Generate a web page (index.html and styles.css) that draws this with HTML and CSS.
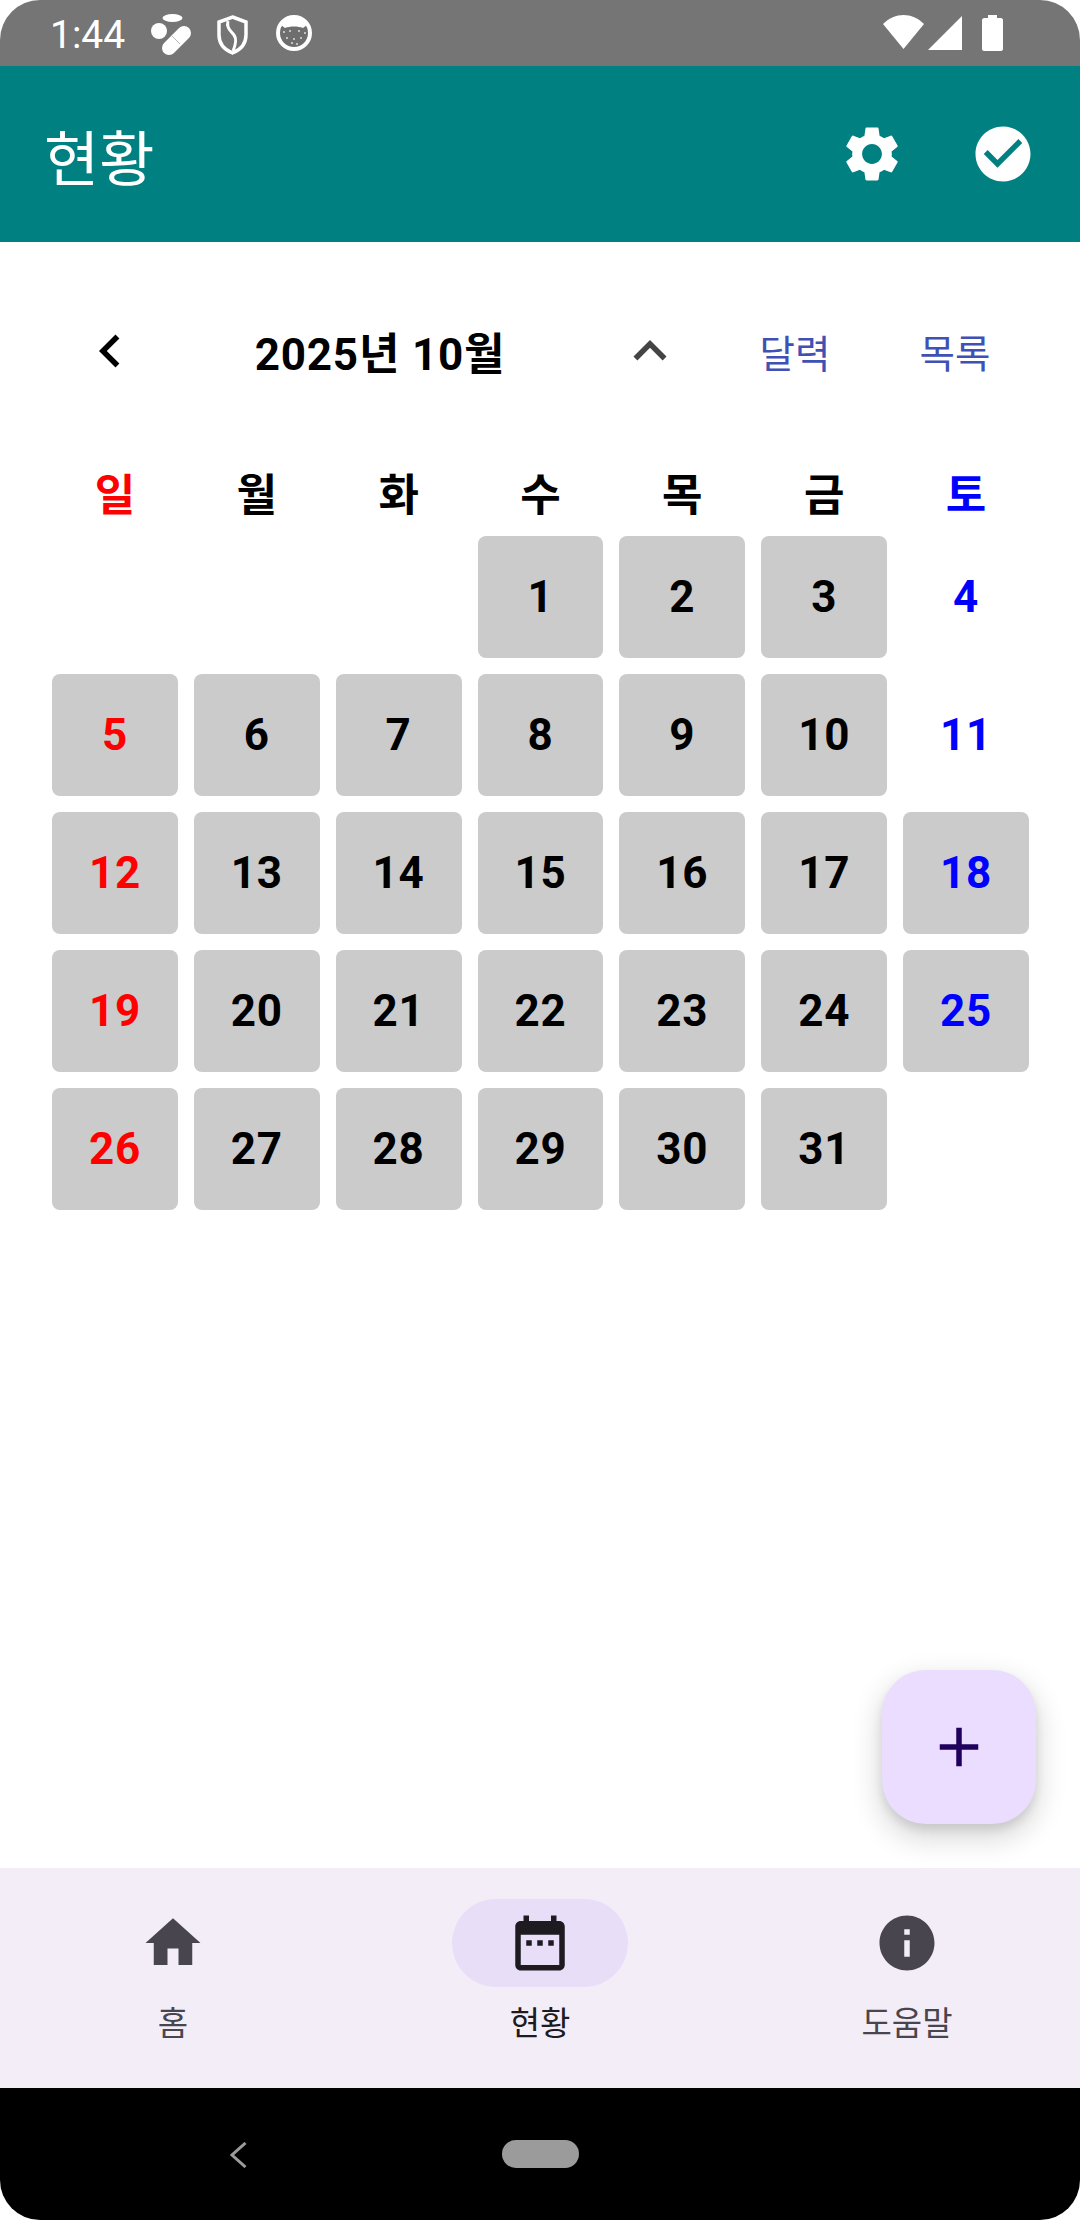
FILE: index.html
```html
<!DOCTYPE html>
<html lang="ko">
<head>
    <meta charset="UTF-8">
    <meta name="viewport" content="width=device-width, initial-scale=1.0">
    <title>현황</title>
    <link rel="stylesheet" href="styles.css">
</head>
<body>
    <div class="phone">
        <div class="status-bar">
            <span class="clock">1:44</span>
            <svg class="st-pill" width="44" height="44" viewBox="0 0 44 44">
                <ellipse cx="22.5" cy="4" rx="10" ry="4" fill="#fff"/>
                <circle cx="9" cy="17" r="8" fill="#fff"/>
                <path d="M19 34L34 19" stroke="#fff" stroke-width="14" stroke-linecap="round"/>
                <path d="M22 22l9 9" stroke="#bbb" stroke-width="1" transform="translate(-1 -1)"/>
            </svg>
            <svg class="st-shield" width="31" height="40" viewBox="0 0 31 40" fill="none" stroke="#fff">
                <path d="M15.500 2L29 7v13c0 9-6 15-13.500 18C8 35 2 29 2 20V7z" stroke-width="3.500"/>
                <path d="M11 6c-2 7 3 10 6 14 3 4 2 9-1 16" stroke-width="3"/>
            </svg>
            <svg class="st-cat" width="36" height="38" viewBox="0 0 36 38">
                <circle cx="18" cy="18" r="16" fill="#6e6e6e" stroke="#fff" stroke-width="4"/>
                <path d="M5 10l4 3c5-2 13-2 18 0l4-3c-3-6-8-8-13-8S8 4 5 10z" fill="#fff"/>
                <g fill="#ddd">
                    <circle cx="8" cy="17" r="1"/><circle cx="14" cy="16" r="1"/><circle cx="23" cy="16" r="1"/>
                    <circle cx="29" cy="18" r="1"/><circle cx="11" cy="23" r="1"/><circle cx="18" cy="24" r="1"/>
                    <circle cx="25" cy="23" r="1"/><circle cx="16" cy="28" r="1"/><circle cx="21" cy="29" r="1"/>
                </g>
            </svg>
            <div class="status-right">
                <svg width="41" height="40" viewBox="0 0 41 40"><path d="M0 9C12-3 29-3 41 9L20.500 34z" fill="#fff"/></svg>
                <svg class="st-signal" width="34" height="40" viewBox="0 0 34 40"><path d="M0 35L34 1v34z" fill="#fff"/></svg>
                <svg class="st-battery" width="21" height="40" viewBox="0 0 21 40"><path d="M6 0h9v3h4c1 0 2 1 2 2v29c0 1-1 2-2 2H2c-1 0-2-1-2-2V5c0-1 1-2 2-2h4z" fill="#fff"/></svg>
            </div>
        </div>

        <header class="app-bar">
            <h1 class="app-title">현황</h1>
            <svg class="bar-icon" width="66" height="66" viewBox="0 0 24 24"><path d="M19.140 12.940c.04-.3.06-.61.06-.94 0-.32-.02-.64-.07-.94l2.030-1.580c.18-.14.23-.41.12-.61l-1.920-3.320c-.12-.22-.37-.29-.59-.22l-2.390.96c-.5-.38-1.030-.7-1.620-.94l-.36-2.540c-.04-.24-.24-.41-.48-.41h-3.840c-.24 0-.43.17-.47.41l-.36 2.540c-.59.24-1.130.57-1.620.94l-2.390-.96c-.22-.08-.47 0-.59.22L2.740 8.870c-.12.21-.08.47.12.61l2.030 1.580c-.05.3-.09.63-.09.94s.02.64.07.94l-2.030 1.580c-.18.14-.23.41-.12.61l1.920 3.320c.12.22.37.29.59.22l2.390-.96c.5.38 1.030.7 1.620.94l.36 2.540c.05.24.24.41.48.41h3.840c.24 0 .44-.17.47-.41l.36-2.540c.59-.24 1.130-.56 1.620-.94l2.390.96c.22.08.47 0 .59-.22l1.920-3.320c.12-.22.07-.47-.12-.61l-2.010-1.580zM12 15.600c-1.980 0-3.600-1.620-3.600-3.600s1.620-3.600 3.600-3.600 3.600 1.620 3.600 3.600-1.620 3.600-3.600 3.600z"/></svg>
            <svg class="bar-icon" width="66" height="66" viewBox="0 0 24 24"><path d="M12 2C6.480 2 2 6.480 2 12s4.480 10 10 10 10-4.480 10-10S17.520 2 12 2zm-2 15l-5-5 1.410-1.410L10 14.170l7.590-7.590L19 8l-9 9z"/></svg>
        </header>

        <main class="content">
            <div class="month-head">
                <svg class="month-prev" width="66" height="66" viewBox="0 0 24 24"><path d="M15.410 7.410L14 6l-6 6 6 6 1.410-1.410L10.830 12z"/></svg>
                <div class="month-title">2025년 10월</div>
                <svg class="month-toggle" width="66" height="66" viewBox="0 0 24 24"><path d="M12 8l-6 6 1.410 1.410L12 10.830l4.590 4.580L18 14z"/></svg>
                <a class="view-link first">달력</a>
                <a class="view-link">목록</a>
            </div>

            <div class="weekdays">
                <div class="sun">일</div>
                <div>월</div>
                <div>화</div>
                <div>수</div>
                <div>목</div>
                <div>금</div>
                <div class="sat">토</div>
            </div>

            <div class="days">
                <div class="day empty"></div>
                <div class="day empty"></div>
                <div class="day empty"></div>
                <div class="day on">1</div>
                <div class="day on">2</div>
                <div class="day on">3</div>
                <div class="day sat">4</div>

                <div class="day on sun">5</div>
                <div class="day on">6</div>
                <div class="day on">7</div>
                <div class="day on">8</div>
                <div class="day on">9</div>
                <div class="day on">10</div>
                <div class="day sat">11</div>

                <div class="day on sun">12</div>
                <div class="day on">13</div>
                <div class="day on">14</div>
                <div class="day on">15</div>
                <div class="day on">16</div>
                <div class="day on">17</div>
                <div class="day on sat">18</div>

                <div class="day on sun">19</div>
                <div class="day on">20</div>
                <div class="day on">21</div>
                <div class="day on">22</div>
                <div class="day on">23</div>
                <div class="day on">24</div>
                <div class="day on sat">25</div>

                <div class="day on sun">26</div>
                <div class="day on">27</div>
                <div class="day on">28</div>
                <div class="day on">29</div>
                <div class="day on">30</div>
                <div class="day on">31</div>
                <div class="day empty"></div>
            </div>

            <button class="fab">
                <svg width="66" height="66" viewBox="0 0 24 24"><path d="M19 13h-6v6h-2v-6H5v-2h6V5h2v6h6v2z"/></svg>
            </button>
        </main>

        <nav class="bottom-nav">
            <div class="nav-item">
                <div class="nav-icon">
                    <svg width="66" height="66" viewBox="0 0 24 24"><path d="M10 20v-6h4v6h5v-8h3L12 3 2 12h3v8z"/></svg>
                </div>
                <span class="nav-label">홈</span>
            </div>
            <div class="nav-item active">
                <div class="nav-icon">
                    <svg width="66" height="66" viewBox="0 0 24 24"><path d="M9 11H7v2h2v-2zm4 0h-2v2h2v-2zm4 0h-2v2h2v-2zm2-7h-1V2h-2v2H8V2H6v2H5c-1.110 0-1.990.9-1.990 2L3 20c0 1.100.89 2 2 2h14c1.100 0 2-.9 2-2V6c0-1.100-.9-2-2-2zm0 16H5V9h14v11z"/></svg>
                </div>
                <span class="nav-label">현황</span>
            </div>
            <div class="nav-item">
                <div class="nav-icon">
                    <svg width="66" height="66" viewBox="0 0 24 24"><path d="M12 2C6.480 2 2 6.480 2 12s4.480 10 10 10 10-4.480 10-10S17.520 2 12 2zm1 15h-2v-6h2v6zm0-8h-2V7h2v2z"/></svg>
                </div>
                <span class="nav-label">도움말</span>
            </div>
        </nav>

        <div class="system-nav">
            <svg class="sys-back" width="17" height="26" viewBox="0 0 17 26"><path d="M15.500 1L2 13l13.500 12" fill="none" stroke="#9b9b9b" stroke-width="3"/></svg>
            <div class="sys-home"></div>
        </div>
    </div>
</body>
</html>
```

FILE: styles.css
```css
* {
    box-sizing: border-box;
}

body {
    margin: 0;
    background-color: white;
    font-family: Roboto, "Noto Sans CJK KR", sans-serif;
}

.phone {
    width: 1080px;
    height: 2220px;
    display: flex;
    flex-direction: column;
    overflow: hidden;
    border-radius: 40px;
    background-color: white;
}

/* status bar */
.status-bar {
    height: 66px;
    flex-shrink: 0;
    display: flex;
    align-items: flex-start;
    padding: 14px 77px 0 50px;
    background-color: #757575;
}

.clock {
    width: 74px;
    margin-top: -1px;
    margin-right: 26px;
    color: white;
    font-size: 39px;
    line-height: 44px;
}

.st-pill {
    margin-right: 23px;
}

.st-shield {
    margin-top: 1px;
    margin-right: 28px;
}

.st-cat {
    margin-top: 1px;
}

.status-right {
    margin-left: auto;
    margin-top: 1px;
    display: flex;
}

.st-signal {
    margin-left: 4px;
}

.st-battery {
    margin-left: 20px;
}

/* app bar */
.app-bar {
    height: 176px;
    flex-shrink: 0;
    display: flex;
    align-items: center;
    padding: 0 44px 0 44px;
    background-color: #008080;
}

.app-title {
    margin: 0 auto 0 0;
    color: white;
    font-size: 60px;
    font-weight: 400;
}

.bar-icon {
    fill: white;
}

.bar-icon + .bar-icon {
    margin-left: 65px;
}

/* calendar */
.content {
    flex: 1;
    position: relative;
    padding-top: 76px;
}

.month-head {
    display: flex;
    align-items: center;
    padding-left: 77px;
}

.month-title {
    width: 474px;
    text-align: center;
    font-size: 44px;
    font-weight: 700;
    letter-spacing: 0.800px;
}

.month-toggle {
    fill: #444;
}

.view-link {
    width: 160px;
    text-align: center;
    color: #3f51b5;
    font-size: 38.500px;
}

.view-link.first {
    margin-left: 32px;
}

.weekdays {
    display: grid;
    grid-template-columns: repeat(7, 1fr);
    gap: 16px;
    margin-top: 76px;
    padding: 0 51px 0 52px;
    height: 76px;
    font-size: 44px;
    font-weight: 700;
    text-align: center;
}

.days {
    display: grid;
    grid-template-columns: repeat(7, 1fr);
    grid-auto-rows: 122px;
    gap: 16px;
    padding: 0 51px 0 52px;
}

.day {
    display: flex;
    align-items: center;
    justify-content: center;
    border-radius: 8px;
    font-size: 44px;
    font-weight: 700;
    letter-spacing: 0.800px;
}

.day.on {
    background-color: #cbcbcb;
}

.sun {
    color: #ff0000;
}

.sat {
    color: #0000ff;
}

.fab {
    position: absolute;
    top: 1428px;
    right: 44px;
    width: 154px;
    height: 154px;
    display: flex;
    align-items: center;
    justify-content: center;
    padding: 0;
    border: none;
    border-radius: 44px;
    background-color: #eaddff;
    box-shadow: 0 12px 28px 4px rgba(0, 0, 0, 0.14), 0 6px 10px rgba(0, 0, 0, 0.1);
    fill: #21005d;
}

/* bottom navigation */
.bottom-nav {
    height: 220px;
    flex-shrink: 0;
    display: flex;
    justify-content: space-between;
    padding-top: 31px;
    background-color: #f3edf7;
}

.nav-item {
    width: 346px;
    display: flex;
    flex-direction: column;
    align-items: center;
    color: #49454f;
    fill: #49454f;
}

.nav-icon {
    width: 176px;
    height: 88px;
    display: flex;
    align-items: center;
    justify-content: center;
    border-radius: 44px;
}

.nav-label {
    margin-top: 15px;
    font-size: 33px;
    line-height: 44px;
}

.nav-item.active {
    color: #1d1b20;
    fill: #1d1b20;
}

.nav-item.active .nav-icon {
    background-color: #e8def8;
}

/* system navigation */
.system-nav {
    height: 132px;
    flex-shrink: 0;
    display: flex;
    align-items: flex-start;
    padding: 52px 0 0 230px;
    background-color: black;
}

.sys-back {
    margin-top: 2px;
}

.sys-home {
    width: 77px;
    height: 28px;
    margin-left: 255px;
    border-radius: 14px;
    background-color: #9b9b9b;
}
```
